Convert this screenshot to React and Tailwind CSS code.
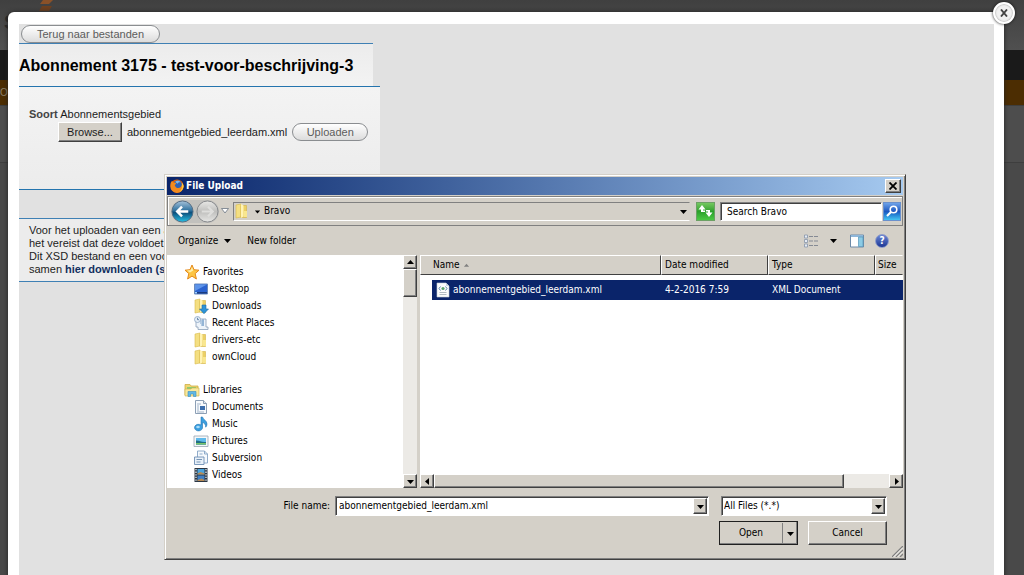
import React from "react";

const raised =
  "border border-t-white border-l-white border-r-[#404040] border-b-[#404040] bg-[#d4d0c8] shadow-[inset_-1px_-1px_0_#808080]";
const sunken =
  "border border-t-[#808080] border-l-[#808080] border-r-white border-b-white shadow-[inset_1px_1px_0_#404040]";
const track = "bg-[#eceae6]";

function Arrow({ dir = "down", className = "" }) {
  const d = {
    down: "M0 2h7L3.500 6z",
    up: "M0 5h7L3.500 1z",
    left: "M5 0v7L1 3.500z",
    right: "M2 0v7l4-3.500z",
  }[dir];
  return (
    <svg viewBox="0 0 7 7" className={`h-[7px] w-[7px] shrink-0 ${className}`} fill="currentColor" aria-hidden="true">
      <path d={d} />
    </svg>
  );
}

function Svg({ children, size = "h-4 w-4", box = "0 0 16 16" }) {
  return (
    <svg viewBox={box} className={`${size} shrink-0`} aria-hidden="true">
      {children}
    </svg>
  );
}

function FolderIcon({ download = false }) {
  return (
    <Svg>
      <path d="M2 2l5-1v13l-5 1z" fill="#f4df82" stroke="#d9bb4c" strokeWidth=".6" />
      <path d="M7 2.500h5.500v12H7z" fill="#ecd064" stroke="#d3b244" strokeWidth=".6" />
      <path d="M7 1l2.500 1.500v11L7 15z" fill="#fff3b5" />
      <path d="M10 8h3v6h-3z" fill="#f9e78f" />
      {download && <path d="M9 7h4v4h2.500L11 15.700 6.500 11H9z" fill="#2e93d6" stroke="#1c6ca8" strokeWidth=".6" />}
    </Svg>
  );
}

function StarIcon() {
  return (
    <Svg>
      <path d="M8 1l2 4.700 5 .5-3.800 3.400L12.400 15 8 12.100 3.600 15l1.200-5.400L1 6.200l5-.5z" fill="#fdc544" stroke="#e58a1b" strokeWidth="1" />
      <path d="M8 3l1.200 3.500L6 8.500l-3-2 3.500-.3z" fill="#fff0ad" />
    </Svg>
  );
}

function DesktopIcon() {
  return (
    <Svg>
      <path d="M1.500 3h13v10h-13z" fill="#2a62cf" stroke="#6b89b8" />
      <path d="M2 3.500h12L2 10z" fill="#5d94ea" />
      <path d="M2 11h12v1.500H2z" fill="#1a3c80" />
      <path d="M2 11h2v1.500H2z" fill="#9fd0ff" />
    </Svg>
  );
}

function RecentIcon() {
  return (
    <Svg>
      <path d="M3 4h10v8h2v2.500H5V12H3z" fill="#eef4fa" stroke="#8aa0b8" strokeWidth=".8" />
      <path d="M7 6h4M7 8h4M8 10h3M10 4v7" stroke="#6d9ac6" strokeWidth=".9" />
      <circle cx="4.500" cy="4.500" r="3" fill="#e4edf6" stroke="#8ca6c4" strokeWidth=".8" />
      <path d="M4.500 2.800v1.900H6" stroke="#4a6f9c" strokeWidth=".8" fill="none" />
    </Svg>
  );
}

function LibrariesIcon() {
  return (
    <Svg>
      <path d="M1 2.500h5l1 1.500h7v9H1z" fill="#f0d671" stroke="#cfae45" strokeWidth=".8" />
      <path d="M3 5h9v4H3z" fill="#8ecb74" />
      <path d="M1 7h6l1-1h7v8H1z" fill="#f9e99d" stroke="#cfae45" strokeWidth=".6" />
      <path d="M4 14.500V9.500h8v5h-2.500V12h-3v2.500z" fill="#61b8e6" stroke="#3b8fc0" strokeWidth=".6" />
    </Svg>
  );
}

function DocumentIcon() {
  return (
    <Svg>
      <path d="M2.500 1.500h8l3 3v10h-11z" fill="#f7fafd" stroke="#8c9fb5" />
      <path d="M10.500 1.500v3h3" fill="#dce6f0" stroke="#8c9fb5" />
      <path d="M4 5h4M4 7h2M4 9h2M4 11h2M4 13h7" stroke="#a3b4c8" />
      <path d="M7 7h5v4H7z" fill="#3c6fae" />
    </Svg>
  );
}

function MusicIcon() {
  return (
    <Svg>
      <path d="M8 1h1.500c.5 2.500 4.500 3.500 4.500 7 0 1.500-.6 2.500-1.300 3.200C12.800 8.500 11.500 7 9.500 6.500V12A4 3.300 0 1 1 8 9z" fill="#3b9fdf" stroke="#2173b3" strokeWidth=".6" />
      <ellipse cx="5" cy="11" rx="1.800" ry="1.200" fill="#a9dcfa" />
    </Svg>
  );
}

function PicturesIcon() {
  return (
    <Svg>
      <path d="M1 3h14v10.500H1z" fill="#f5f7f9" stroke="#98a5b3" strokeWidth=".8" />
      <path d="M3 5h10v6.500H3z" fill="#5fb9ea" />
      <path d="M3 7.500c4 0 5 2 10 1.500v2.500H3z" fill="#1f6e83" />
      <path d="M3 10h10v1.500H3z" fill="#79c36a" />
    </Svg>
  );
}

function SubversionIcon() {
  return (
    <Svg>
      <path d="M4.500 1h7l3 3v9h-10z" fill="#f5f9fd" stroke="#84a3c4" strokeWidth=".9" />
      <path d="M11.500 1v3h3M6.500 4h3" fill="none" stroke="#84a3c4" strokeWidth=".9" />
      <path d="M1.500 7h9.500v7.500H1.500z" fill="#e8f0f8" stroke="#6f8fb4" strokeWidth=".9" />
      <path d="M3.500 9.500h5.500M3.500 12h4" stroke="#7796b8" />
    </Svg>
  );
}

function VideoIcon() {
  return (
    <Svg>
      <path d="M1.500 1h13v14h-13z" fill="#2c3642" />
      <path d="M4.500 2h7v5.500h-7z" fill="#4ba3dc" />
      <path d="M4.500 8.500h7V14h-7z" fill="#3f7fc4" />
      <path d="M4.500 6.500l3-1.500 4 1.500v1h-7zM4.500 13l4-1.500 3 1.500v1h-7z" fill="#b78a53" />
      <path d="M3 2v13M13 2v13" stroke="#e5ebf0" strokeWidth="1.300" strokeDasharray="1.300 1.300" />
    </Svg>
  );
}

function XmlIcon() {
  return (
    <Svg>
      <path d="M2 1h9l3 3v11H2z" fill="#fbfcfd" stroke="#c2ccd6" strokeWidth=".6" />
      <path d="M11 1v3h3z" fill="#c9d5e0" />
      <path d="M5.500 4.500L4 6.500l1.500 2M10.500 4.500l1.500 2-1.500 2" fill="none" stroke="#5d86a8" />
      <circle cx="8" cy="6.500" r="1.600" fill="#5aa36d" />
      <path d="M4.500 10.500h7M4.500 12.500h7" stroke="#9fa9b3" strokeWidth=".8" />
    </Svg>
  );
}

function FirefoxIcon() {
  return (
    <Svg size="h-[14px] w-[14px]">
      <circle cx="8" cy="8" r="7.500" fill="#e66000" />
      <circle cx="8.800" cy="6.800" r="5" fill="#2f62b5" />
      <path d="M6 3c2-1.500 5-1 6.500 1-2-.6-3 0-3.500 1-1 0-2-.5-3-2z" fill="#7bb8ec" />
      <path d="M1 4c1-1 1.200-2 1.200-2l1.600 2c1.500-.3 2.600.2 3.200.8-.2 1.200-1.500 1.500-1.500 2.500 1 3 4.500 3.700 6.500 2 1.500-1.300 1.700-3 1.500-5 1.500 1.500 2 3 2 4.500A7.500 7.500 0 0 1 .5 8C.5 6.500.5 5 1 4z" fill="#f38a1e" />
      <path d="M13.500 4.300c1.500 1.500 2 2.700 2 4.200-.3 3-2.500 5.500-5 6.500 3-2.500 4-6 3-10.700z" fill="#ffcd3d" />
    </Svg>
  );
}

function BackIcon() {
  return (
    <Svg size="h-[23px] w-[23px]" box="0 0 24 24">
      <defs>
        <linearGradient id="back" x1="0" y1="0" x2="0" y2="1">
          <stop offset="0" stopColor="#a6c2da" />
          <stop offset=".45" stopColor="#31739f" />
          <stop offset=".55" stopColor="#0d4f7c" />
          <stop offset="1" stopColor="#26c1e5" />
        </linearGradient>
      </defs>
      <circle cx="12" cy="12" r="11" fill="url(#back)" stroke="#526b82" />
      <path d="M18 12H7M11.500 7L6.500 12l5 5" fill="none" stroke="#fff" strokeWidth="2.600" />
    </Svg>
  );
}

function ForwardIcon() {
  return (
    <Svg size="h-[23px] w-[23px]" box="0 0 24 24">
      <defs>
        <linearGradient id="fwd" x1="0" y1="0" x2="0" y2="1">
          <stop offset="0" stopColor="#e8e8e6" />
          <stop offset=".5" stopColor="#bfbfbd" />
          <stop offset="1" stopColor="#e6e6e4" />
        </linearGradient>
      </defs>
      <circle cx="12" cy="12" r="11" fill="url(#fwd)" stroke="#85878a" />
      <path d="M6 12h11M12.500 7l5 5-5 5" fill="none" stroke="#dededc" strokeWidth="2.200" />
    </Svg>
  );
}

const favorites = [
  ["Desktop", <DesktopIcon />],
  ["Downloads", <FolderIcon download />],
  ["Recent Places", <RecentIcon />],
  ["drivers-etc", <FolderIcon />],
  ["ownCloud", <FolderIcon />],
];
const libraries = [
  ["Documents", <DocumentIcon />],
  ["Music", <MusicIcon />],
  ["Pictures", <PicturesIcon />],
  ["Subversion", <SubversionIcon />],
  ["Videos", <VideoIcon />],
];

function TreeGroup({ label, icon, items }) {
  return (
    <div>
      <div className="flex h-[17px] items-center gap-[3px] pl-4">
        {icon}
        {label}
      </div>
      <ul>
        {items.map(([name, glyph]) => (
          <li key={name} className="flex h-[17px] items-center gap-[3px] pl-[25px]">
            {glyph}
            {name}
          </li>
        ))}
      </ul>
    </div>
  );
}

function ScrollButton({ dir, label }) {
  return (
    <button type="button" aria-label={label} className={`flex h-[14px] w-[14px] shrink-0 items-center justify-center ${raised}`}>
      <Arrow dir={dir} />
    </button>
  );
}

function HeaderCell({ children, className = "px-[3px]" }) {
  return (
    <th className={`h-5 border border-t-white border-r-[#404040] border-b-[#404040] border-l-white bg-[#d4d0c8] text-left font-normal ${className}`}>
      {children}
    </th>
  );
}

function FileDialog() {
  return (
    <section
      aria-label="File Upload"
      className="absolute top-[174px] left-[164px] flex w-[742px] flex-col border border-t-[#d4d0c8] border-r-[#404040] border-b-[#404040] border-l-[#d4d0c8] bg-[#d4d0c8] p-[2px] font-['DejaVu_Sans_Condensed','DejaVu_Sans',sans-serif] text-[10px] leading-[14px] text-black shadow-[inset_1px_1px_0_#fff,inset_-1px_-1px_0_#808080]"
    >
      <header className="flex h-[18px] items-center gap-[2px] bg-linear-to-r from-[#0a246a] to-[#a6caf0] pr-[2px] pl-[3px] text-white">
        <FirefoxIcon />
        <h2 className="flex-1 font-bold">File Upload</h2>
        <button type="button" aria-label="Close" className={`flex h-[14px] w-4 items-center justify-center text-black ${raised}`}>
          <svg viewBox="0 0 8 8" className="h-2 w-2" aria-hidden="true">
            <path d="M.5.5l7 7M7.500.5l-7 7" stroke="currentColor" strokeWidth="1.800" />
          </svg>
        </button>
      </header>

      <nav className="mt-px flex h-[30px] items-center border border-[#808080] pr-px pl-[3px] shadow-[inset_1px_1px_0_#fff]">
        <div className="flex items-center gap-[2px] rounded-full bg-[#c2c1bd]">
          <button type="button" aria-label="Back"><BackIcon /></button>
          <button type="button" aria-label="Forward"><ForwardIcon /></button>
        </div>
        <button type="button" aria-label="Recent locations" className="ml-[2px]">
          <svg viewBox="0 0 8 6" className="h-[6px] w-2" aria-hidden="true">
            <path d="M.5.5h7L4 5z" fill="#fff" stroke="#6c7683" strokeWidth=".8" />
          </svg>
        </button>
        <div className="ml-1 flex h-[19px] flex-1 items-center border border-t-[#808080] border-r-[#d4d0c8] border-b-white border-l-[#808080]">
          <FolderIcon />
          <span className="ml-1 flex flex-1 items-center gap-[3px]"><Arrow className="scale-75" />Bravo</span>
          <button type="button" aria-label="Previous locations" className="px-[2px]"><Arrow /></button>
        </div>
        <button type="button" aria-label="Refresh" className="ml-[6px] flex h-[19px] w-[19px] items-center justify-center border border-[#6ba064] bg-linear-to-b from-[#74c85f] via-[#2ba02b] to-[#4bc943]">
          <svg viewBox="0 0 17 14" className="h-[14px] w-[17px] shrink-0" aria-hidden="true">
            <path d="M5 1L1.500 5.500H4V8h4V6.500H6v-1h2.500z" fill="#fff" />
            <path d="M12 13l3.500-4.500H13V6H9v1.500h2v1H8.500z" fill="#fff" />
          </svg>
        </button>
        <input
          aria-label="Search Bravo"
          defaultValue="Search Bravo"
          className={`ml-[5px] h-[19px] w-[162px] bg-white pl-[6px] outline-none ${sunken}`}
        />
        <button type="button" aria-label="Search" className="ml-px flex h-[19px] w-[18px] items-center justify-center border border-[#6a90cc] bg-linear-to-b from-[#6ea2e8] via-[#1b57c0] to-[#45c4f0]">
          <svg viewBox="0 0 14 14" className="h-[14px] w-[14px]" fill="none" stroke="#fff" aria-hidden="true">
            <circle cx="8.500" cy="5.500" r="3.300" strokeWidth="1.600" />
            <path d="M6 8l-4 4" strokeWidth="2.200" />
          </svg>
        </button>
      </nav>

      <div className="flex h-[29px] items-center pr-[14px] pl-[11px]">
        <button type="button" className="flex items-center gap-[6px]">Organize <Arrow /></button>
        <button type="button" className="ml-4">New folder</button>
        <div className="flex-1" />
        <button type="button" aria-label="Change your view" className="flex items-center gap-3">
          <Svg size="h-[14px] w-[14px]" box="0 0 14 14">
            <path d="M.5 1h3v3h-3zM.5 5.500h3v3h-3zM.5 10h3v3h-3z" fill="#e4ebf4" stroke="#8794aa" strokeWidth=".8" />
            <path d="M5 2.500h9M5 7h9M5 11.500h9" stroke="#858a94" strokeDasharray="4 1" />
          </Svg>
          <Arrow />
        </button>
        <button type="button" aria-label="Show the preview pane" className="ml-[13px]">
          <Svg size="h-[14px] w-[14px]" box="0 0 14 14">
            <path d="M.5 1h13v12H.5z" fill="#fff" stroke="#6c8aa8" />
            <path d="M1 1h12v2H1z" fill="#8fb7da" />
            <path d="M8.500 3h4.500v9.500H8.500z" fill="#8ccbe5" stroke="#5595b8" strokeWidth=".7" />
          </Svg>
        </button>
        <button type="button" aria-label="Help" className="ml-[11px] flex h-[14px] w-[14px] items-center justify-center rounded-full border border-[#8c9bc8] bg-linear-to-b from-[#6d86d4] to-[#1c3594] font-bold text-white">
          ?
        </button>
      </div>

      <div className="flex h-[233px] gap-[3px]">
        <div className="flex w-[250px] shrink-0 bg-white">
          <div className="flex flex-1 flex-col gap-4 pt-2 pl-px">
            <TreeGroup label="Favorites" icon={<StarIcon />} items={favorites} />
            <TreeGroup label="Libraries" icon={<LibrariesIcon />} items={libraries} />
          </div>
          <div className={`flex w-[14px] flex-col ${track}`}>
            <ScrollButton dir="up" label="Scroll up" />
            <div className={`h-7 ${raised}`} />
            <div className="flex-1" />
            <ScrollButton dir="down" label="Scroll down" />
          </div>
        </div>
        <div className="flex min-w-0 flex-1 flex-col bg-white">
          <table className="w-full table-fixed border-separate border-spacing-0">
            <colgroup>
              <col className="w-[241px]" />
              <col className="w-[107px]" />
              <col className="w-[107px]" />
              <col />
            </colgroup>
            <thead>
              <tr>
                <HeaderCell className="pl-3">
                  Name <Arrow dir="up" className="ml-px inline scale-75 text-[#808080]" />
                </HeaderCell>
                <HeaderCell>Date modified</HeaderCell>
                <HeaderCell>Type</HeaderCell>
                <HeaderCell className="border-r-[#d4d0c8] px-[2px]">Size</HeaderCell>
              </tr>
            </thead>
            <tbody className="text-white">
              <tr>
                <td className="pt-[5px] pl-3">
                  <div className="flex h-5 items-center gap-[2px] bg-[#0a246a] pl-[3px]">
                    <XmlIcon />
                    abonnementgebied_leerdam.xml
                  </div>
                </td>
                <td className="pt-[5px]"><div className="flex h-5 items-center bg-[#0a246a] pl-1">4-2-2016 7:59</div></td>
                <td className="pt-[5px]"><div className="flex h-5 items-center bg-[#0a246a] pl-1">XML Document</div></td>
                <td className="pt-[5px]"><div className="h-5 bg-[#0a246a]" /></td>
              </tr>
            </tbody>
          </table>
          <div className="flex-1" />
          <div className={`flex h-[14px] ${track}`}>
            <ScrollButton dir="left" label="Scroll left" />
            <div className={`w-[410px] ${raised}`} />
            <div className="flex-1" />
            <ScrollButton dir="right" label="Scroll right" />
          </div>
        </div>
      </div>

      <form className="flex h-[69px] flex-col gap-[5px] pt-2 pr-4" onSubmit={(e) => e.preventDefault()}>
        <div className="flex items-center">
          <label htmlFor="file-name" className="w-[168px] pr-[5px] text-right">File name:</label>
          <div className={`flex h-5 flex-1 bg-white p-px ${sunken}`}>
            <input id="file-name" defaultValue="abonnementgebied_leerdam.xml" className="min-w-0 flex-1 bg-white pl-[2px] outline-none" />
            <button type="button" aria-label="Previous file names" className={`flex w-[14px] items-center justify-center ${raised}`}>
              <Arrow />
            </button>
          </div>
          <div className={`relative ml-3 flex h-5 w-[166px] bg-white p-px ${sunken}`}>
            <select aria-label="File type" className="w-full appearance-none bg-white pl-px outline-none">
              <option>All Files (*.*)</option>
            </select>
            <span className={`pointer-events-none absolute inset-y-px right-px flex w-[14px] items-center justify-center ${raised}`}>
              <Arrow />
            </span>
          </div>
        </div>
        <div className="flex justify-end gap-[10px]">
          <div className={`flex h-6 w-[79px] outline-1 -outline-offset-1 outline-[#202020] ${raised}`}>
            <button type="submit" className="flex-1">Open</button>
            <button type="button" aria-label="More open options" className="my-px flex w-[15px] items-center justify-center border-l border-[#808080]">
              <Arrow />
            </button>
          </div>
          <button type="button" className={`h-6 w-[79px] ${raised}`}>Cancel</button>
        </div>
      </form>
      <svg viewBox="0 0 11 11" className="absolute right-[2px] bottom-[2px] h-[11px] w-[11px]" aria-hidden="true">
        <path d="M0 11L11 0M4 11l7-7M8 11l3-3" stroke="#808080" strokeWidth="1.300" />
        <path d="M1.500 11L11 1.500M5.500 11L11 5.500" stroke="#fff" strokeWidth=".8" />
      </svg>
    </section>
  );
}

const pill =
  "h-[18px] rounded-full border border-[#8a8d90] bg-linear-to-b from-white to-[#dcdcdc] text-[11px] leading-4 text-[#5c5c5c]";

function Backdrop() {
  return (
    <div className="absolute inset-0 flex flex-col bg-[#494949]">
      <div className="flex h-[50px] bg-linear-to-b from-[#404040] to-[#505050]">
        <span className="pt-3 pl-1 text-[20px] leading-5 font-bold text-[#292929]">S</span>
        <svg viewBox="0 0 14 12" className="ml-[22px] h-3 w-[14px]" aria-hidden="true">
          <path d="M4 0h10l-4 4H1z" fill="#8a5128" />
          <path d="M3 6h10l-3 5H0z" fill="#6d4020" />
        </svg>
      </div>
      <div className="h-[30px] bg-[#1a1a1a]" />
      <div className="h-[25px] bg-[#4c2d02] text-[10px] leading-[25px] text-[#8d816d]">Or</div>
      <div className="h-[58px] border-y border-[#3e3e3e] bg-[#4d4d4d]" />
    </div>
  );
}

export default function App() {
  return (
    <div className="relative h-screen overflow-hidden font-['Liberation_Sans',Arial,sans-serif] text-[11px] text-[#1c1c1c]">
      <Backdrop />
      <main className="relative mt-3 mr-5 ml-2 min-h-screen rounded-t-[6px] bg-white pt-3 pr-[10px] pl-[11px] shadow-[0_0_4px_#222]">
        <div className="min-h-screen bg-[#e1e1e1]">
          <div className="flex h-[19px] items-end pl-[2px]">
            <button type="button" className={`w-[139px] ${pill}`}>Terug naar bestanden</button>
          </div>
          <div className="h-[43px] w-[354px] border-t border-[#3f80b4] bg-linear-to-b from-[#ececec] to-[#f3f3f3]">
            <h1 className="text-[16px] leading-[43px] font-bold whitespace-nowrap text-black">
              Abonnement 3175 - test-voor-beschrijving-3
            </h1>
          </div>
          <form className="h-[104px] w-[361px] border-y border-[#2474ae] bg-linear-to-b from-[#f3f3f3] to-[#ececec] pt-[19px] pl-[10px]" onSubmit={(e) => e.preventDefault()}>
            <p className="leading-4"><span className="font-bold text-[#444]">Soort</span> Abonnementsgebied</p>
            <div className="flex items-center pl-[29px]">
              <button type="button" className={`h-5 w-[64px] leading-4 ${raised}`}>Browse...</button>
              <span className="ml-[5px]">abonnementgebied_leerdam.xml</span>
              <button type="submit" className={`ml-[5px] w-[76px] ${pill}`}>Uploaden</button>
            </div>
          </form>
          <div className="mt-7 w-[361px] overflow-hidden border-y border-[#3f80b4] bg-[#ececec] py-[5px] pl-[10px] leading-[13px] whitespace-nowrap">
            <p>Voor het uploaden van een a</p>
            <p>het vereist dat deze voldoet a</p>
            <p>Dit XSD bestand en een voo</p>
            <p>samen <a href="#download" className="font-bold text-[#12305f]">hier downloaden (sv</a></p>
          </div>
        </div>
      </main>
      <button
        type="button"
        aria-label="Sluiten"
        className="absolute top-[2px] right-[9px] flex h-[22px] w-[22px] items-center justify-center rounded-full border-2 border-white bg-[#f1f1f1] shadow-[0_0_3px_#111,inset_0_0_2px_#888]"
      >
        <svg viewBox="0 0 8 8" className="h-2 w-2" aria-hidden="true">
          <path d="M1 .5l6 7M7 .5l-6 7" stroke="#444" strokeWidth="1.900" />
        </svg>
      </button>
      <FileDialog />
    </div>
  );
}
